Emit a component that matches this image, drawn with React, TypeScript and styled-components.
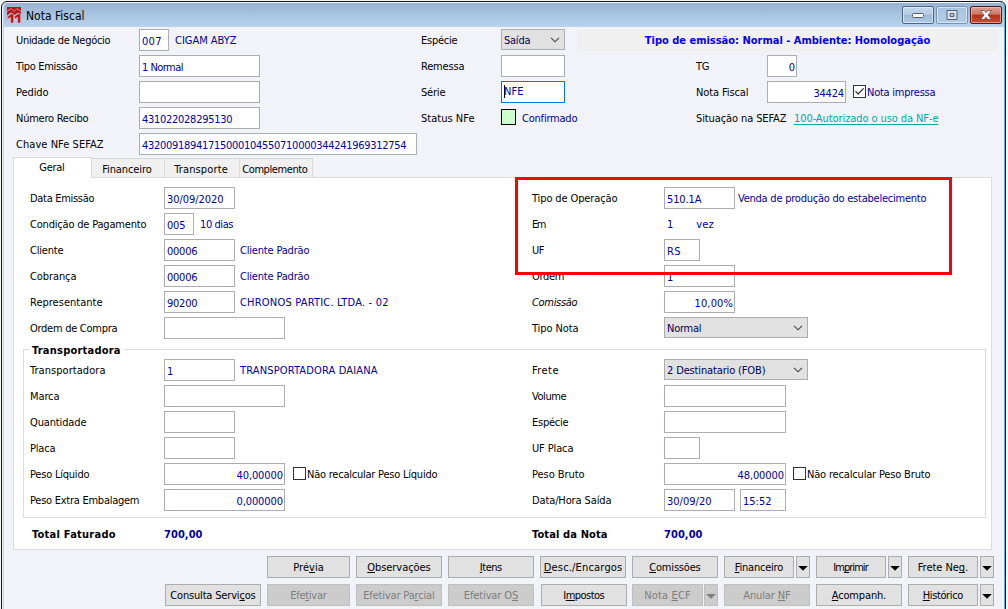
import React from "react";
import styled, { createGlobalStyle, css } from "styled-components";

const FAMILY = '"DejaVu Sans Condensed", "DejaVu Sans", "Liberation Sans", sans-serif';

const GlobalStyle = createGlobalStyle`
  html, body { margin: 0; padding: 0; }
  body {
    width: 1008px;
    height: 609px;
    overflow: hidden;
    background: #f6f6f6;
    font: 11px/13px ${FAMILY};
    color: #000;
  }
  * { box-sizing: border-box; }
`;

/* ---------- text ---------- */

const context = document.createElement("canvas").getContext("2d");

function tracking(text: string, width: number, bold: boolean, size: number) {
  if (!context || text.length < 2) return 0;
  context.font = `${bold ? "bold " : ""}${size}px ${FAMILY}`;
  return (width + 0.5 - context.measureText(text).width) / (text.length - 1);
}

const Run = styled.span<{ $track: number; $bold: boolean; $italic?: boolean; $size: number }>`
  display: inline-block;
  white-space: pre;
  font-size: ${(p) => p.$size}px;
  font-weight: ${(p) => (p.$bold ? 700 : 400)};
  font-style: ${(p) => (p.$italic ? "italic" : "normal")};
  letter-spacing: ${(p) => p.$track.toFixed(3)}px;
  margin-right: ${(p) => (-p.$track).toFixed(3)}px;
`;

const Mnemonic = styled.span`
  text-decoration: underline;
  text-underline-offset: 1px;
  text-decoration-thickness: 1px;
  text-decoration-skip-ink: none;
`;

type TextProps = { t: string; w: number; bold?: boolean; italic?: boolean; size?: number };

/* "&" in front of a letter marks the keyboard mnemonic */
function Text({ t, w, bold = false, italic, size = 11 }: TextProps) {
  const at = t.indexOf("&");
  const plain = t.replace("&", "");
  return (
    <Run $track={tracking(plain, w, bold, size)} $bold={bold} $italic={italic} $size={size}>
      {at < 0 ? (
        plain
      ) : (
        <>
          {plain.slice(0, at)}
          <Mnemonic>{plain[at]}</Mnemonic>
          {plain.slice(at + 1)}
        </>
      )}
    </Run>
  );
}

/* ---------- window ---------- */

const Window = styled.div`
  width: 1005px;
  height: 620px;
  margin: 1px 0 0 1px;
  border: 1px solid #10161c;
  border-radius: 6px 6px 0 0;
  background: #f2f3f9;
  box-shadow: inset 1px 0 0 #eef4fa, inset 2px 0 0 #b9d1ea, inset -1px 0 0 #58b4d8;
  padding: 1px 1px 0 2px;
`;

const TitleBar = styled.header`
  display: flex;
  align-items: center;
  height: 24px;
  padding: 0 2px 0 3px;
  border-radius: 4px 4px 0 0;
  background: linear-gradient(#97b3d1, #a9c4e0 50%, #b9d3ec);
`;

const Title = styled.div`
  flex: 1;
  padding: 2px 0 0 5px;
`;

const Controls = styled.div`
  display: flex;
  gap: 2px;
`;

const Control = styled.div<{ $kind: "plain" | "dim" | "close" }>`
  display: flex;
  align-items: center;
  justify-content: center;
  width: 32px;
  height: 18px;
  border-radius: 2px;
  border: 1px solid ${(p) => ({ plain: "#4e6480", dim: "#7b93b0", close: "#4b1a1c" })[p.$kind]};
  box-shadow: inset 0 0 0 1px ${(p) => (p.$kind === "close" ? "rgba(255,200,185,.6)" : "rgba(230,242,255,.65)")};
  background: ${(p) =>
    p.$kind === "close"
      ? "linear-gradient(#dc9c8c 0, #cf7865 45%, #b8301c 50%, #c64f36 100%)"
      : p.$kind === "dim"
        ? "linear-gradient(#a9c2dd, #b4cde6)"
        : "linear-gradient(#c4d7ec 0, #b6cce4 45%, #9db8d5 50%, #b2cbe5 100%)"};
`;

/* ---------- form parts ---------- */

const Row = styled.div<{ $columns: string }>`
  display: grid;
  grid-template-columns: ${(p) => p.$columns};
  height: 26px;
  align-items: start;
`;

const Cell = styled.div<{ $label?: number }>`
  display: grid;
  grid-template-columns: ${(p) => p.$label ?? 133}px max-content;
`;

const Label = styled.div<{ $indent?: number }>`
  display: flex;
  align-items: center;
  height: 22px;
  padding-left: ${(p) => p.$indent ?? 0}px;
`;

const Line = styled.div`
  display: flex;
`;

const Value = styled.div<{ $gap: number; $link?: boolean }>`
  display: flex;
  align-items: center;
  height: 22px;
  margin-left: ${(p) => p.$gap}px;
  color: #00009b;
  ${(p) =>
    p.$link &&
    css`
      color: #00a8a8;
      text-decoration: underline;
      text-underline-offset: 2px;
    `}
`;

const Box = styled.div<{ $w: number; $right?: boolean; $focus?: boolean; $gap?: number }>`
  display: flex;
  align-items: center;
  justify-content: ${(p) => (p.$right ? "flex-end" : "flex-start")};
  width: ${(p) => p.$w}px;
  height: 22px;
  margin-left: ${(p) => p.$gap ?? 0}px;
  padding: ${(p) => (p.$focus ? "0 2px 1px" : "2px 1px 0 2px")};
  border: 1px solid ${(p) => (p.$focus ? "#0078d7" : "#abadb3")};
  background: #fff;
  color: #00009b;
`;

const Caret = styled.span`
  width: 1px;
  height: 13px;
  margin-right: -1px;
  background: #000;
`;

const SelectBox = styled.div<{ $w: number }>`
  display: flex;
  align-items: center;
  justify-content: space-between;
  width: ${(p) => p.$w}px;
  height: 21px;
  padding: 1px 4px 0 2px;
  border: 1px solid #adadad;
  background: #e1e1e1;
  color: #000060;
`;

const CheckLine = styled.label<{ $gap: number; $blue?: boolean }>`
  display: flex;
  align-items: center;
  gap: 1px;
  height: 22px;
  margin-left: ${(p) => p.$gap}px;
  color: ${(p) => (p.$blue ? "#00009b" : "#000")};
`;

const CheckSquare = styled.span`
  display: flex;
  width: 13px;
  height: 13px;
  margin-bottom: 1px;
  border: 1px solid #333;
  background: #fff;
`;

const StatusSquare = styled.div`
  width: 15px;
  height: 16px;
  margin-top: 2px;
  border: 1px solid #000;
  background: #ccffcc;
`;

const Banner = styled.div`
  display: flex;
  align-items: center;
  justify-content: center;
  width: 421px;
  height: 22px;
  margin-left: -119px;
  background: #f0f0f0;
  color: #0000ff;
`;

function Select({ w, t, tw }: { w: number; t: string; tw: number }) {
  return (
    <SelectBox $w={w}>
      <Text t={t} w={tw} />
      <svg width="10" height="6" viewBox="0 0 10 6" fill="none" stroke="#444" strokeWidth="1.1">
        <path d="M1 .8 5 4.8 9 .8" />
      </svg>
    </SelectBox>
  );
}

function Check({ gap, t, w, checked }: { gap: number; t: string; w: number; checked?: boolean }) {
  return (
    <CheckLine $gap={gap} $blue={checked}>
      <CheckSquare>
        {checked && (
          <svg width="11" height="11" viewBox="0 0 11 11" fill="none" stroke="#222" strokeWidth="1.2">
            <path d="M1.5 5.3 4.2 8 9.6 2.4" />
          </svg>
        )}
      </CheckSquare>
      <Text t={t} w={w} />
    </CheckLine>
  );
}

type FieldProps = {
  label: string;
  lw: number;
  span?: number;
  italic?: boolean;
  children?: React.ReactNode;
};

/* "span" is the width of the label column; the default one belongs to the right half of the panel */
function Field({ label, lw, italic, children, span }: FieldProps) {
  return (
    <Cell $label={span}>
      <Label $indent={span === undefined ? 1 : 0}>
        <Text t={label} w={lw} italic={italic} />
      </Label>
      <Line>{children}</Line>
    </Cell>
  );
}

/* ---------- header, tabs, panel ---------- */

const Header = styled.section`
  padding: 2px 0 0 12px;
  height: 129px;
`;

const HEAD = "405px 275px 1fr";
const BODY = "501px 1fr";

const Tabs = styled.nav`
  display: flex;
  align-items: flex-end;
  height: 21px;
  padding-left: 9px;
`;

const Tab = styled.div<{ $w: number; $active?: boolean }>`
  display: flex;
  justify-content: center;
  width: ${(p) => p.$w}px;
  height: ${(p) => (p.$active ? 21 : 19)}px;
  margin-bottom: ${(p) => (p.$active ? -1 : 0)}px;
  padding: ${(p) => (p.$active ? "3px 1px 0 0" : "4px 2px 0 0")};
  border: 1px solid #d9d9d9;
  border-bottom: 0;
  border-left-width: ${(p) => (p.$active ? 1 : 0)}px;
  background: ${(p) => (p.$active ? "#fff" : "#f0f0f0")};
  z-index: ${(p) => (p.$active ? 1 : 0)};
`;

const Panel = styled.main`
  position: relative;
  width: 979px;
  height: 373px;
  margin-left: 9px;
  padding: 9px 5px 0 9px;
  border: 1px solid #dcdcdc;
  background: #fff;
`;

const Rows = styled.div`
  padding-left: 7px;
`;

const Group = styled.section`
  width: 963px;
  height: 169px;
  margin-top: 6px;
  padding: 0 0 0 6px;
  border: 1px solid #dcdcdc;
`;

const GroupTitle = styled.div`
  width: max-content;
  height: 13px;
  margin: -6px 0 2px 0;
  padding: 0 3px 0 2px;
  background: #fff;
`;

const Totals = styled.div`
  display: grid;
  grid-template-columns: 132px 368px 132px 1fr;
  padding: 10px 0 0 9px;
`;

const Total = styled.div`
  color: #00009b;
`;

const Highlight = styled.div`
  position: absolute;
  left: 501px;
  top: -1px;
  width: 437px;
  height: 98px;
  border: 3px solid #ff0000;
`;

/* ---------- buttons ---------- */

const ButtonBar = styled.footer<{ $left: number }>`
  display: flex;
  height: 22px;
  margin: 6px 0 0 ${(p) => p.$left}px;
`;

const Button = styled.div<{ $w: number; $gap?: number; $off?: boolean }>`
  display: flex;
  align-items: center;
  justify-content: center;
  flex: none;
  width: ${(p) => p.$w}px;
  height: 22px;
  margin-left: ${(p) => p.$gap ?? 6}px;
  border: 1px solid ${(p) => (p.$off ? "#bfbfbf" : "#adadad")};
  background: ${(p) => (p.$off ? "#cccccc" : "#e1e1e1")};
  color: ${(p) => (p.$off ? "#7d7d7d" : "#000")};
`;

const Arrow = styled.svg`
  flex: none;
  margin-top: 2px;
`;

function Drop({ off, gap = 2 }: { off?: boolean; gap?: number }) {
  return (
    <Button $w={14} $gap={gap} $off={off}>
      <Arrow width="10" height="5" viewBox="0 0 10 5" fill="currentColor">
        <path d="M.2 0H9.8L5 4.8Z" />
      </Arrow>
    </Button>
  );
}

export default function App() {
  return (
    <>
      <GlobalStyle />
      <Window>
        <TitleBar>
          <svg width="14" height="16" viewBox="0 0 14 16">
            <path d="M0 0H14V7.5L11 5.5 7.5 8 4 5.5 0 8.5Z" fill="#b5161b" />
            <path d="M0 4.5 4 1.5 7 4.5 10 1.5 14 4.5" stroke="#e9a3a4" strokeWidth=".8" fill="none" />
            <path
              d="M.6 9.6 4.4 6.8H6.6V16H3.6V10.2L.6 12.2ZM7.6 9.2 11 6.8H13.6V16H10.6V10.2L7.6 12Z"
              fill="#c4151b"
              stroke="#e6c3cb"
              strokeWidth=".5"
            />
          </svg>
          <Title>
            <Text t="Nota Fiscal" w={58} size={12} />
          </Title>
          <Controls>
            <Control $kind="plain">
              <svg width="12" height="6" viewBox="0 0 12 6">
                <rect x=".5" y="1.5" width="11" height="4" rx="1" fill="#fff" stroke="#55606e" />
              </svg>
            </Control>
            <Control $kind="dim">
              <svg width="12" height="10" viewBox="0 0 12 10">
                <path fillRule="evenodd" d="M1 .5H11V9.5H1ZM4 3.5V6.5H8V3.5Z" fill="#dbe4ee" stroke="#566475" />
              </svg>
            </Control>
            <Control $kind="close">
              <svg width="12" height="10" viewBox="0 0 12 10">
                <path d="M.6.5H4L6 2.7 8 .5H11.4L8 5 11.4 9.5H8L6 7.3 4 9.5H.6L4 5Z" fill="#fff" stroke="#5b4348" strokeWidth=".7" />
              </svg>
            </Control>
          </Controls>
        </TitleBar>

        <Header>
          <Row $columns={HEAD}>
            <Field label="Unidade de Negócio" lw={94} span={123}>
              <Box $w={30}><Text t="007" w={19} /></Box>
              <Value $gap={6}><Text t="CIGAM ABYZ" w={61} /></Value>
            </Field>
            <Field label="Espécie" lw={36} span={80}>
              <Select w={64} t="Saída" tw={26} />
            </Field>
            <Banner>
              <Text t="Tipo de emissão: Normal - Ambiente: Homologação" w={285} bold />
            </Banner>
          </Row>
          <Row $columns={HEAD}>
            <Field label="Tipo Emissão" lw={61} span={123}>
              <Box $w={121}><Text t="1 Normal" w={41} /></Box>
            </Field>
            <Field label="Remessa" lw={43} span={80}>
              <Box $w={64} />
            </Field>
            <Field label="TG" lw={13} span={71}>
              <Box $w={30} $right><Text t="0" w={6} /></Box>
            </Field>
          </Row>
          <Row $columns={HEAD}>
            <Field label="Pedido" lw={32} span={123}>
              <Box $w={121} />
            </Field>
            <Field label="Série" lw={24} span={80}>
              <Box $w={64} $focus>
                <Caret />
                <Text t="NFE" w={19} />
              </Box>
            </Field>
            <Field label="Nota Fiscal" lw={52} span={71}>
              <Box $w={79} $right><Text t="34424" w={30} /></Box>
              <Check gap={7} t="Nota impressa" w={68} checked />
            </Field>
          </Row>
          <Row $columns={HEAD}>
            <Field label="Número Recibo" lw={72} span={123}>
              <Box $w={121}><Text t="431022028295130" w={90} /></Box>
            </Field>
            <Field label="Status NFe" lw={53} span={80}>
              <StatusSquare />
              <Value $gap={6}><Text t="Confirmado" w={55} /></Value>
            </Field>
            <Field label="Situação na SEFAZ" lw={90} span={98}>
              <Value $gap={0} $link><Text t="100-Autorizado o uso da NF-e" w={144} /></Value>
            </Field>
          </Row>
          <Row $columns={HEAD}>
            <Field label="Chave NFe SEFAZ" lw={87} span={123}>
              <Box $w={278}><Text t="43200918941715000104550710000344241969312754" w={264} /></Box>
            </Field>
          </Row>
        </Header>

        <Tabs>
          <Tab $w={79} $active><Text t="Geral" w={25} /></Tab>
          <Tab $w={73}><Text t="Financeiro" w={49} /></Tab>
          <Tab $w={75}><Text t="Transporte" w={53} /></Tab>
          <Tab $w={73}><Text t="Complemento" w={65} /></Tab>
        </Tabs>

        <Panel>
          <Rows>
            <Row $columns={BODY}>
              <Field label="Data Emissão" lw={64} span={134}>
                <Box $w={71}><Text t="30/09/2020" w={56} /></Box>
              </Field>
              <Field label="Tipo de Operação" lw={85}>
                <Box $w={71}><Text t="510.1A" w={34} /></Box>
                <Value $gap={3}><Text t="Venda de produção do estabelecimento" w={188} /></Value>
              </Field>
            </Row>
            <Row $columns={BODY}>
              <Field label="Condição de Pagamento" lw={116} span={134}>
                <Box $w={30}><Text t="005" w={18} /></Box>
                <Value $gap={6}><Text t="10 dias" w={33} /></Value>
              </Field>
              <Field label="Em" lw={14}>
                <Value $gap={3}><Text t="1" w={6} /></Value>
                <Value $gap={23}><Text t="vez" w={17} /></Value>
              </Field>
            </Row>
            <Row $columns={BODY}>
              <Field label="Cliente" lw={33} span={134}>
                <Box $w={71}><Text t="00006" w={30} /></Box>
                <Value $gap={5}><Text t="Cliente Padrão" w={69} /></Value>
              </Field>
              <Field label="UF" lw={12}>
                <Box $w={36}><Text t="RS" w={13} /></Box>
              </Field>
            </Row>
            <Row $columns={BODY}>
              <Field label="Cobrança" lw={46} span={134}>
                <Box $w={71}><Text t="00006" w={30} /></Box>
                <Value $gap={5}><Text t="Cliente Padrão" w={69} /></Value>
              </Field>
              <Field label="Ordem" lw={32}>
                <Box $w={71}><Text t="1" w={6} /></Box>
              </Field>
            </Row>
            <Row $columns={BODY}>
              <Field label="Representante" lw={72} span={134}>
                <Box $w={71}><Text t="90200" w={30} /></Box>
                <Value $gap={5}><Text t="CHRONOS PARTIC. LTDA. - 02" w={148} /></Value>
              </Field>
              <Field label="Comissão" lw={45} italic>
                <Box $w={71} $right><Text t="10,00%" w={38} /></Box>
              </Field>
            </Row>
            <Row $columns={BODY}>
              <Field label="Ordem de Compra" lw={87} span={134}>
                <Box $w={121} />
              </Field>
              <Field label="Tipo Nota" lw={46}>
                <Select w={144} t="Normal" tw={34} />
              </Field>
            </Row>
          </Rows>

          <Group>
            <GroupTitle><Text t="Transportadora" w={88} bold /></GroupTitle>
            <Row $columns={BODY}>
              <Field label="Transportadora" lw={75} span={134}>
                <Box $w={71}><Text t="1" w={6} /></Box>
                <Value $gap={5}><Text t="TRANSPORTADORA DAIANA" w={137} /></Value>
              </Field>
              <Field label="Frete" lw={26}>
                <Select w={144} t="2 Destinatario (FOB)" tw={98} />
              </Field>
            </Row>
            <Row $columns={BODY}>
              <Field label="Marca" lw={29} span={134}><Box $w={121} /></Field>
              <Field label="Volume" lw={34}><Box $w={122} /></Field>
            </Row>
            <Row $columns={BODY}>
              <Field label="Quantidade" lw={56} span={134}><Box $w={71} /></Field>
              <Field label="Espécie" lw={36}><Box $w={122} /></Field>
            </Row>
            <Row $columns={BODY}>
              <Field label="Placa" lw={25} span={134}><Box $w={71} /></Field>
              <Field label="UF Placa" lw={41}><Box $w={36} /></Field>
            </Row>
            <Row $columns={BODY}>
              <Field label="Peso Líquido" lw={59} span={134}>
                <Box $w={121} $right><Text t="40,00000" w={46} /></Box>
                <Check gap={8} t="Não recalcular Peso Líquido" w={130} />
              </Field>
              <Field label="Peso Bruto" lw={52}>
                <Box $w={122} $right><Text t="48,00000" w={46} /></Box>
                <Check gap={7} t="Não recalcular Peso Bruto" w={123} />
              </Field>
            </Row>
            <Row $columns={BODY}>
              <Field label="Peso Extra Embalagem" lw={109} span={134}>
                <Box $w={121} $right><Text t="0,000000" w={46} /></Box>
              </Field>
              <Field label="Data/Hora Saída" lw={79}>
                <Box $w={71}><Text t="30/09/20" w={44} /></Box>
                <Box $w={46} $gap={5}><Text t="15:52" w={28} /></Box>
              </Field>
            </Row>
          </Group>

          <Totals>
            <div><Text t="Total Faturado" w={83} bold /></div>
            <Total><Text t="700,00" w={38} bold /></Total>
            <div><Text t="Total da Nota" w={75} bold /></div>
            <Total><Text t="700,00" w={38} bold /></Total>
          </Totals>
          <Highlight />
        </Panel>

        <ButtonBar $left={257}>
          <Button $w={83}><Text t="Pré&via" w={30} /></Button>
          <Button $w={86}><Text t="&Observações" w={63} /></Button>
          <Button $w={86}><Text t="&Itens" w={22} /></Button>
          <Button $w={86}><Text t="&Desc./Encargos" w={78} /></Button>
          <Button $w={86}><Text t="&Comissões" w={51} /></Button>
          <Button $w={70}><Text t="&Financeiro" w={48} /></Button>
          <Drop />
          <Button $w={70}><Text t="Im&primir" w={35} /></Button>
          <Drop />
          <Button $w={70}><Text t="Frete Ne&g." w={50} /></Button>
          <Drop />
        </ButtonBar>
        <ButtonBar $left={155}>
          <Button $w={96}><Text t="Consulta Servi&ços" w={85} /></Button>
          <Button $w={83} $off><Text t="Efe&tivar" w={36} /></Button>
          <Button $w={86} $off><Text t="Efetivar Pa&rcial" w={71} /></Button>
          <Button $w={86} $off><Text t="Efetivar O&S" w={54} /></Button>
          <Button $w={86} $gap={7}><Text t="I&mpostos" w={41} /></Button>
          <Button $w={71} $gap={5} $off><Text t="Nota &ECF" w={46} /></Button>
          <Drop off gap={1} />
          <Button $w={86} $off><Text t="Anular &NF" w={47} /></Button>
          <Button $w={86}><Text t="&Acompanh." w={54} /></Button>
          <Button $w={70}><Text t="&Histórico" w={40} /></Button>
          <Drop />
        </ButtonBar>
      </Window>
    </>
  );
}
